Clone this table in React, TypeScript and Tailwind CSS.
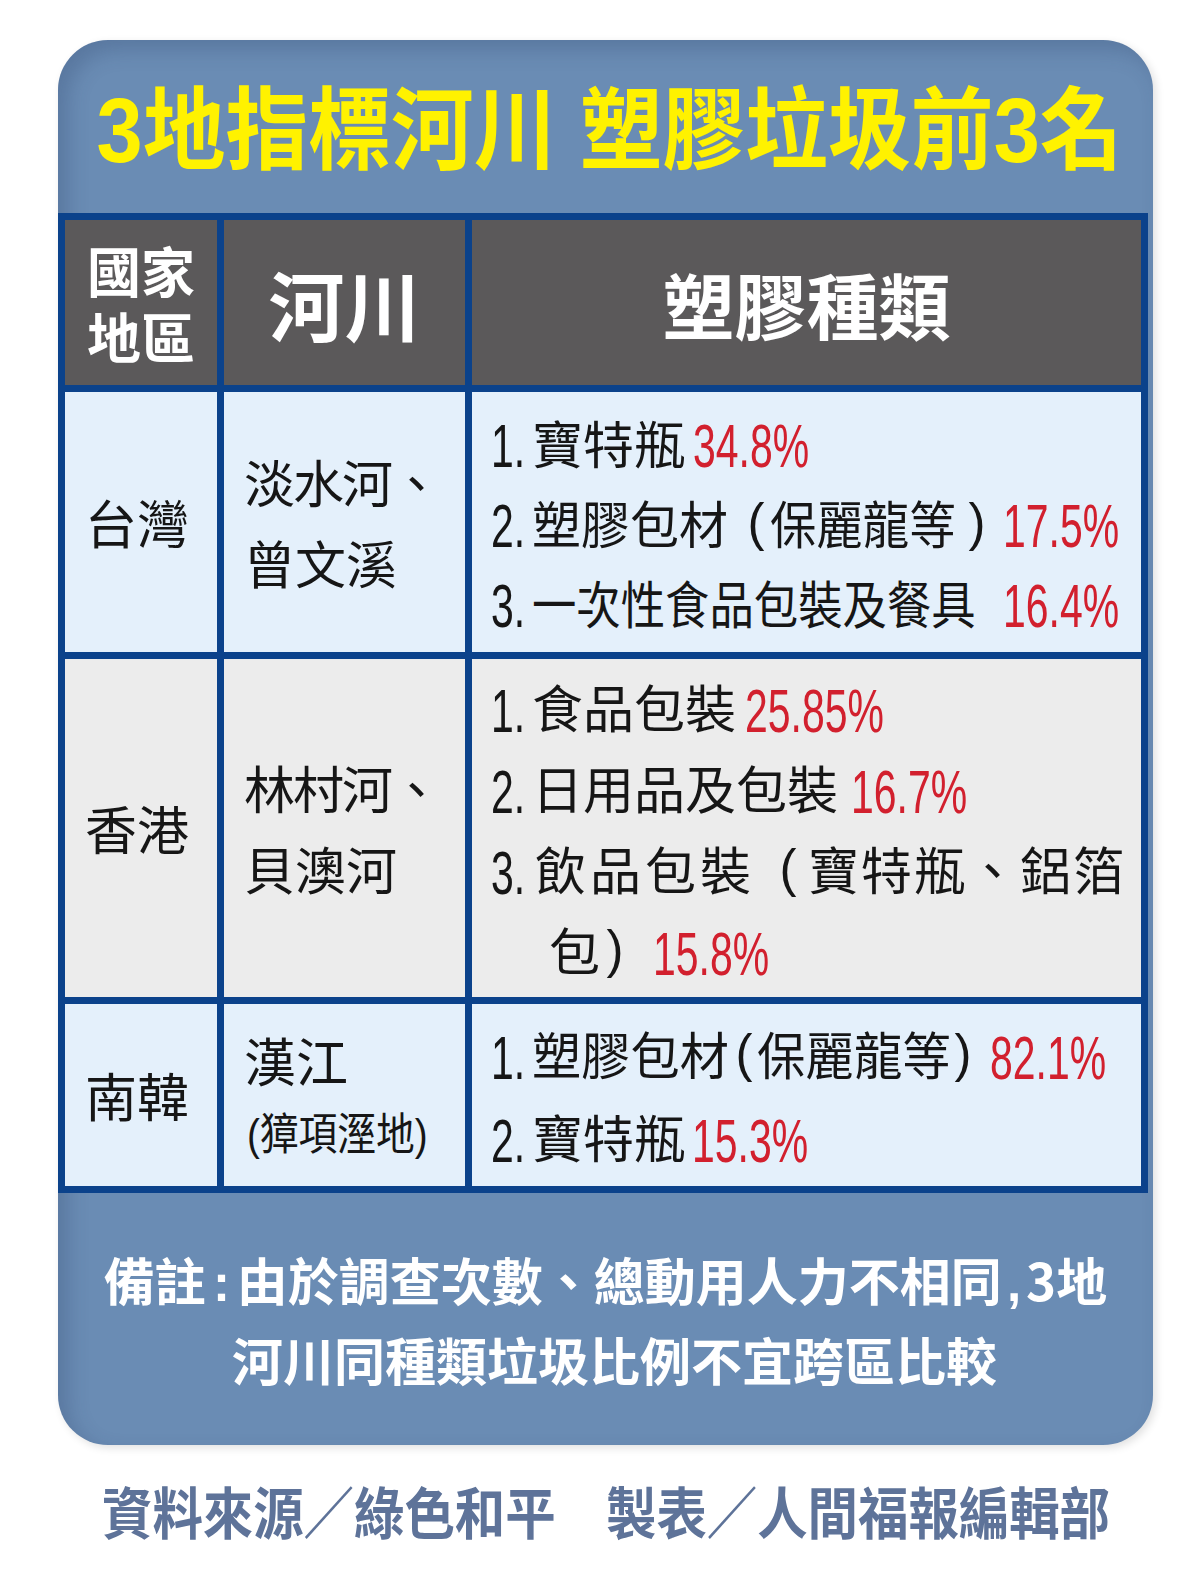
import React from "react";

type Kids = { children: React.ReactNode };

// condensed digits (prefix "1." / percentages)
function Idx({ children, w = "w-[41px]" }: Kids & { w?: string }) {
  return (
    <span className={`flex shrink-0 items-center ${w}`}>
      <span className="block shrink-0 origin-left translate-y-[4px] scale-x-[0.66] whitespace-nowrap font-['Liberation_Sans',Arial,sans-serif] text-[62px] leading-none text-[#161616]">
        {children}
      </span>
    </span>
  );
}

function Pct({ children, ml }: Kids & { ml: string }) {
  return (
    <span className={`flex shrink-0 items-center ${ml}`}>
      <span className="block shrink-0 origin-left translate-y-[4px] scale-x-[0.66] whitespace-nowrap font-['Liberation_Sans',Arial,sans-serif] text-[62px] leading-none text-[#d2202e]">
        {children}
      </span>
    </span>
  );
}

// squeezed CJK run, w = box width, s = horizontal scale
function Seg({ children, w, s }: Kids & { w: string; s: string }) {
  return (
    <span className={`flex shrink-0 items-center ${w}`}>
      <span className={`block shrink-0 origin-left whitespace-nowrap ${s}`}>{children}</span>
    </span>
  );
}

function Paren({ children, cls }: Kids & { cls: string }) {
  return (
    <span className={`flex shrink-0 justify-center font-['Liberation_Sans',Arial,sans-serif] ${cls}`}>
      {children}
    </span>
  );
}

function Line({ children, h = "h-[80px]" }: Kids & { h?: string }) {
  return (
    <div className={`flex items-center whitespace-nowrap text-[51px] leading-none ${h}`}>{children}</div>
  );
}

const head = "flex items-center justify-center bg-[#5b595a] font-bold text-white";
const blue = "bg-[#e4f0fb]";
const gray = "bg-[#ececec]";

export default function App() {
  return (
    <div className="min-h-[1583px] w-[1200px] overflow-hidden bg-white pt-[40px] font-['Noto_Sans_CJK_TC',sans-serif] text-[#161616]">
      <div className="ml-[58px] w-[1095px] rounded-[50px] bg-[#6a8cb4] shadow-[inset_10px_10px_20px_rgba(40,60,100,0.25),3px_3px_8px_rgba(0,0,0,0.12)]">
        {/* title */}
        <div className="flex h-[173px] items-center justify-center pt-[9px] pl-[8px]">
          <h1 className="shrink-0 origin-center scale-x-[0.92] whitespace-nowrap font-['Liberation_Sans','Noto_Sans_CJK_TC',sans-serif] text-[90px] font-bold leading-none text-[#fff200]">
            3地指標河川 塑膠垃圾前3名
          </h1>
        </div>

        {/* table */}
        <div className="mr-[5px] grid grid-cols-[152px_241px_669px] grid-rows-[165px_260px_338px_182px] gap-[7px] bg-[#0b428b] p-[7px]">
          <div className={head}>
            <p className="text-center text-[54px] leading-[66px]">
              國家
              <br />
              地區
            </p>
          </div>
          <div className={`${head} text-[76px] leading-none`}>河川</div>
          <div className={`${head} text-[72px] leading-none`}>塑膠種類</div>

          {/* Taiwan */}
          <div className={`${blue} flex items-center justify-center pr-[8px] text-[52px]`}>台灣</div>
          <div className={`${blue} flex flex-col justify-center pl-[20px] text-[51px] leading-[81px]`}>
            <span className="tracking-[-2px]">淡水河、</span>
            <span>曾文溪</span>
          </div>
          <div className={`${blue} flex flex-col justify-center pl-[19px]`}>
            <Line>
              <Idx>1.</Idx>
              <span className="shrink-0">寶特瓶</span>
              <Pct ml="ml-[8px]">34.8%</Pct>
            </Line>
            <Line>
              <Idx>2.</Idx>
              <Seg w="w-[196px]" s="scale-x-[0.96]">塑膠包材</Seg>
              <Paren cls="ml-[14px] w-[28px]">(</Paren>
              <Seg w="w-[186px]" s="scale-x-[0.91]">保麗龍等</Seg>
              <Paren cls="ml-[7px] w-[28px]">)</Paren>
              <Pct ml="ml-[12px]">17.5%</Pct>
            </Line>
            <Line>
              <Idx>3.</Idx>
              <Seg w="w-[444px]" s="scale-x-[0.87]">一次性食品包裝及餐具</Seg>
              <Pct ml="ml-[27px]">16.4%</Pct>
            </Line>
          </div>

          {/* Hong Kong */}
          <div className={`${gray} flex items-center justify-center pr-[8px] text-[52px]`}>香港</div>
          <div className={`${gray} flex flex-col justify-center pl-[20px] text-[51px] leading-[81px]`}>
            <span className="tracking-[-2px]">林村河、</span>
            <span>貝澳河</span>
          </div>
          <div className={`${gray} flex flex-col justify-center pl-[19px]`}>
            <Line h="h-[81px]">
              <Idx>1.</Idx>
              <span className="shrink-0">食品包裝</span>
              <Pct ml="ml-[9px]">25.85%</Pct>
            </Line>
            <Line h="h-[81px]">
              <Idx>2.</Idx>
              <span className="shrink-0">日用品及包裝</span>
              <Pct ml="ml-[13px]">16.7%</Pct>
            </Line>
            <Line h="h-[81px]">
              <Idx w="w-[44px]">3.</Idx>
              <span className="shrink-0 tracking-[4px]">飲品包裝</span>
              <Paren cls="ml-[19px] w-[28px]">(</Paren>
              <span className="ml-[6px] shrink-0 tracking-[2px]">寶特瓶、鋁箔</span>
            </Line>
            <Line h="h-[81px]">
              <span className="ml-[58px] shrink-0">包</span>
              <Paren cls="ml-[2px] w-[26px]">)</Paren>
              <Pct ml="ml-[25px]">15.8%</Pct>
            </Line>
          </div>

          {/* South Korea */}
          <div className={`${blue} flex items-center justify-center pr-[8px] text-[52px]`}>南韓</div>
          <div className={`${blue} flex flex-col justify-center pl-[20px]`}>
            <span className="flex h-[76px] items-center text-[52px] leading-none">漢江</span>
            <span className="flex h-[70px] items-center pl-[3px]">
              <span className="block shrink-0 origin-left scale-x-[0.88] whitespace-nowrap text-[44px] leading-none">
                <span className="font-['Liberation_Sans',sans-serif]">(</span>獐項溼地
                <span className="font-['Liberation_Sans',sans-serif]">)</span>
              </span>
            </span>
          </div>
          <div className={`${blue} flex flex-col justify-center pl-[19px]`}>
            <Line h="h-[83px]">
              <Idx>1.</Idx>
              <Seg w="w-[197px]" s="scale-x-[0.965]">塑膠包材</Seg>
              <Paren cls="ml-[2px] w-[26px]">(</Paren>
              <Seg w="w-[194px]" s="scale-x-[0.95]">保麗龍等</Seg>
              <Paren cls="w-[24px]">)</Paren>
              <Pct ml="ml-[15px]">82.1%</Pct>
            </Line>
            <Line h="h-[83px]">
              <Idx>2.</Idx>
              <span className="shrink-0">寶特瓶</span>
              <Pct ml="ml-[7px]">15.3%</Pct>
            </Line>
          </div>
        </div>

        {/* note */}
        <div className="flex h-[252px] flex-col items-center justify-center gap-[25px] text-[51px] font-bold leading-none text-white">
          <p className="whitespace-nowrap">
            備註
            <span className="mx-[7px] font-['Liberation_Sans',sans-serif]">:</span>
            由於調查次數、總動用人力不相同
            <span className="mx-[5px] font-['Liberation_Sans',sans-serif]">,</span>
            3地
          </p>
          <p className="pl-[18px]">河川同種類垃圾比例不宜跨區比較</p>
        </div>
      </div>

      {/* source line */}
      <div className="ml-[58px] flex h-[130px] w-[1095px] items-center justify-center">
        <p className="shrink-0 origin-center scale-x-[0.9] whitespace-nowrap text-[56px] font-bold leading-none text-[#5e7399]">
          資料來源／綠色和平　製表／人間福報編輯部
        </p>
      </div>
    </div>
  );
}
